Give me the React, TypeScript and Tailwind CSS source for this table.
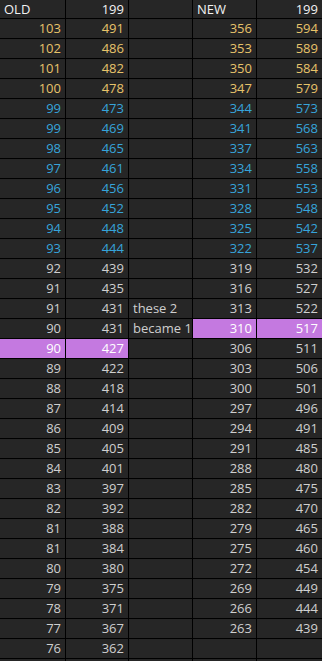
import React from 'react';

type Tone = 'head' | 'gold' | 'blue' | 'gray';

const rows: { old: [string, string]; note?: string; nw: [string, string]; tone: Tone; hiOld?: boolean; hiNew?: boolean }[] = [
  { old: ['103', '491'], nw: ['356', '594'], tone: 'gold' },
  { old: ['102', '486'], nw: ['353', '589'], tone: 'gold' },
  { old: ['101', '482'], nw: ['350', '584'], tone: 'gold' },
  { old: ['100', '478'], nw: ['347', '579'], tone: 'gold' },
  { old: ['99', '473'], nw: ['344', '573'], tone: 'blue' },
  { old: ['99', '469'], nw: ['341', '568'], tone: 'blue' },
  { old: ['98', '465'], nw: ['337', '563'], tone: 'blue' },
  { old: ['97', '461'], nw: ['334', '558'], tone: 'blue' },
  { old: ['96', '456'], nw: ['331', '553'], tone: 'blue' },
  { old: ['95', '452'], nw: ['328', '548'], tone: 'blue' },
  { old: ['94', '448'], nw: ['325', '542'], tone: 'blue' },
  { old: ['93', '444'], nw: ['322', '537'], tone: 'blue' },
  { old: ['92', '439'], nw: ['319', '532'], tone: 'gray' },
  { old: ['91', '435'], nw: ['316', '527'], tone: 'gray' },
  { old: ['91', '431'], note: 'these 2', nw: ['313', '522'], tone: 'gray' },
  { old: ['90', '431'], note: 'became 1', nw: ['310', '517'], tone: 'gray', hiNew: true },
  { old: ['90', '427'], nw: ['306', '511'], tone: 'gray', hiOld: true },
  { old: ['89', '422'], nw: ['303', '506'], tone: 'gray' },
  { old: ['88', '418'], nw: ['300', '501'], tone: 'gray' },
  { old: ['87', '414'], nw: ['297', '496'], tone: 'gray' },
  { old: ['86', '409'], nw: ['294', '491'], tone: 'gray' },
  { old: ['85', '405'], nw: ['291', '485'], tone: 'gray' },
  { old: ['84', '401'], nw: ['288', '480'], tone: 'gray' },
  { old: ['83', '397'], nw: ['285', '475'], tone: 'gray' },
  { old: ['82', '392'], nw: ['282', '470'], tone: 'gray' },
  { old: ['81', '388'], nw: ['279', '465'], tone: 'gray' },
  { old: ['81', '384'], nw: ['275', '460'], tone: 'gray' },
  { old: ['80', '380'], nw: ['272', '454'], tone: 'gray' },
  { old: ['79', '375'], nw: ['269', '449'], tone: 'gray' },
  { old: ['78', '371'], nw: ['266', '444'], tone: 'gray' },
  { old: ['77', '367'], nw: ['263', '439'], tone: 'gray' },
  { old: ['76', '362'], nw: ['', ''], tone: 'gray' },
];

const toneClass: Record<Tone, string> = {
  head: 'text-[#f2f2f2]',
  gold: 'text-[#e8c36a]',
  blue: 'text-[#36a4da]',
  gray: 'text-[#cfcfcf]',
};

const Cell: React.FC<{ children?: React.ReactNode; right?: boolean; tone: Tone; hi?: boolean }> = ({ children, right, tone, hi }) => (
  <div
    className={`flex items-center px-1 whitespace-nowrap overflow-hidden ${right ? 'justify-end' : 'justify-start'} ${
      hi ? 'bg-[#c479e0] text-white' : `bg-[#262626] ${toneClass[tone]}`
    }`}
  >
    {children}
  </div>
);

export default function App() {
  return (
    <div
      className="w-[322px] h-[661px] overflow-hidden bg-black text-[13px] leading-none"
      style={{ fontFamily: '"Open Sans", "Noto Sans", sans-serif' }}
    >
      <div className="grid grid-cols-[65px_62px_63px_63px_65px] grid-rows-[18px] auto-rows-[19px] gap-px">
        {/* header */}
        <Cell tone="head">OLD</Cell>
        <Cell tone="head" right>199</Cell>
        <Cell tone="head" />
        <Cell tone="head">NEW</Cell>
        <Cell tone="head" right>199</Cell>

        {rows.map((r, i) => (
          <React.Fragment key={i}>
            <Cell tone={r.tone} right hi={r.hiOld}>{r.old[0]}</Cell>
            <Cell tone={r.tone} right hi={r.hiOld}>{r.old[1]}</Cell>
            <Cell tone="gray">{r.note}</Cell>
            <Cell tone={r.tone} right hi={r.hiNew}>{r.nw[0]}</Cell>
            <Cell tone={r.tone} right hi={r.hiNew}>{r.nw[1]}</Cell>
          </React.Fragment>
        ))}

        {/* partial row at the bottom */}
        <Cell tone="gray" />
        <Cell tone="gray" />
        <Cell tone="gray" />
        <Cell tone="gray" />
        <Cell tone="gray" />
      </div>
    </div>
  );
}
